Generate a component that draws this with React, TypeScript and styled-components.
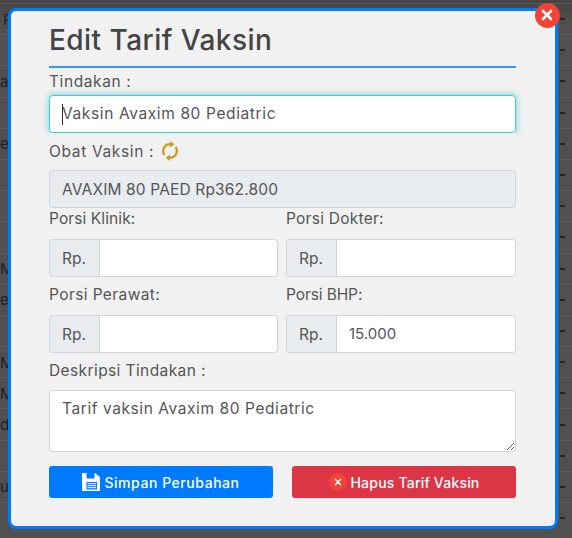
import styled, { createGlobalStyle } from "styled-components";

const GlobalStyle = createGlobalStyle`
  html, body {
    margin: 0;
    height: 100%;
    overflow: hidden;
    background-color: #505050;
  }
  * {
    box-sizing: border-box;
  }
`;

const Page = styled.div`
  position: relative;
  width: 572px;
  height: 538px;
  overflow: hidden;
  background-color: #505050;
  font-family: Inter, "Liberation Sans", sans-serif;
`;

const BackgroundTable = styled.div`
  display: flex;
  flex-direction: column;
  padding-top: 3px;
  background: linear-gradient(#444444, #505050 24px);
`;

const BackgroundRow = styled.div<{ $indent: number }>`
  display: flex;
  justify-content: space-between;
  align-items: center;
  height: 31.2px;
  padding-left: ${(p) => p.$indent}px;
  padding-right: 7px;
  border-top: 1px solid #5b5b5b;
  color: #202020;
  font-size: 15px;
`;

const RowDash = styled.span`
  width: 5px;
  height: 2px;
  background-color: #252525;
`;

const Modal = styled.div`
  position: absolute;
  top: 8px;
  left: 8px;
  width: 550px;
  height: 521px;
  padding: 0 39px 0 38px;
  background-color: #f1f1f1;
  border: 3px solid #007bff;
  border-radius: 8px;
`;

const CloseButton = styled.button`
  position: absolute;
  top: -8.5px;
  right: -4.5px;
  width: 25px;
  height: 25px;
  padding: 0;
  display: flex;
  align-items: center;
  justify-content: center;
  border: none;
  border-radius: 50%;
  background-color: #f44336;
`;

const Title = styled.h2`
  margin: 0;
  height: 55px;
  padding-top: 9px;
  color: #444444;
  font-size: 28px;
  font-weight: 500;
  line-height: 40px;
  letter-spacing: 0.45px;
`;

const Divider = styled.div`
  height: 1.5px;
  background-color: #3097ff;
`;

const Label = styled.label<{ $top?: number; $bottom?: number; $spacing?: number }>`
  position: relative;
  display: flex;
  align-items: center;
  height: 22px;
  margin-top: ${(p) => p.$top ?? 0}px;
  margin-bottom: ${(p) => p.$bottom ?? 0}px;
  color: #555555;
  font-size: 15.5px;
  line-height: 22px;
  letter-spacing: ${(p) => p.$spacing ?? 0.4}px;
`;

const FocusField = styled.div`
  position: relative;
  height: 38px;
`;

const Caret = styled.span`
  position: absolute;
  top: 9px;
  left: 13px;
  width: 1px;
  height: 21px;
  background-color: #333333;
`;

const TextInput = styled.input<{ $focused?: boolean }>`
  display: block;
  width: 100%;
  height: 38px;
  padding: 0 12px 2px;
  border: 1px solid ${(p) => (p.$focused ? "#47c9d8" : "#ced4da")};
  border-radius: 4px;
  background-color: #ffffff;
  color: #555555;
  font-family: inherit;
  font-size: 15.5px;
  letter-spacing: 0.62px;
  outline: none;
  box-shadow: ${(p) => (p.$focused ? "0 0 5px 2px rgba(71, 201, 216, 0.45)" : "none")};
`;

const ObatRow = styled.div`
  position: relative;
  display: flex;
  align-items: center;
  gap: 7px;
  height: 37px;
  padding: 7px 0 8px;
  background-color: #f1f1f1;
  color: #555555;
  font-size: 15.5px;
  letter-spacing: 0.65px;
`;

const DisabledInput = styled(TextInput)`
  padding-bottom: 0;
  background-color: #e9ecef;
  letter-spacing: 0.15px;
`;

const Columns = styled.div`
  display: grid;
  grid-template-columns: 229px 230px;
  column-gap: 8px;
`;

const InputGroup = styled.div`
  display: flex;
  height: 38px;
`;

const Addon = styled.span`
  display: flex;
  align-items: center;
  width: 50px;
  padding-left: 12px;
  border: 1px solid #ced4da;
  border-right: none;
  border-radius: 4px 0 0 4px;
  background-color: #e9ecef;
  color: #555555;
  font-size: 15.5px;
`;

const GroupInput = styled(TextInput)`
  flex: 1;
  min-width: 0;
  border-radius: 0 4px 4px 0;
  font-size: 15px;
  letter-spacing: 0;
`;

const TextArea = styled.textarea`
  display: block;
  width: 100%;
  height: 62px;
  padding: 6px 12px;
  border: 1px solid #ced4da;
  border-radius: 4px;
  background-color: #ffffff;
  color: #555555;
  font-family: inherit;
  font-size: 15.5px;
  line-height: 24px;
  letter-spacing: 0.58px;
  outline: none;
`;

const Actions = styled.div`
  display: grid;
  grid-template-columns: 224px 224px;
  column-gap: 19px;
  margin-top: 14px;
`;

const ActionButton = styled.button<{ $color: string; $spacing: number }>`
  display: flex;
  align-items: center;
  justify-content: center;
  gap: 4px;
  height: 32px;
  padding: 0;
  border: none;
  border-radius: 3px;
  background-color: ${(p) => p.$color};
  color: #ffffff;
  font-family: inherit;
  font-size: 14px;
  font-weight: 500;
  letter-spacing: ${(p) => p.$spacing}px;
`;

const XBadge = styled.span`
  display: flex;
  align-items: center;
  justify-content: center;
  width: 18px;
  height: 18px;
  border-radius: 50%;
  background-color: #f44336;
`;

const rows = [
  { indent: 3, text: "R" },
  { indent: 100, text: "" },
  { indent: -2, text: "a" },
  { indent: 100, text: "" },
  { indent: -1, text: "e" },
  { indent: 100, text: "" },
  { indent: 100, text: "" },
  { indent: 100, text: "" },
  { indent: -4, text: "M" },
  { indent: -1, text: "e" },
  { indent: 100, text: "" },
  { indent: -4, text: "M" },
  { indent: 0, text: "M" },
  { indent: -3, text: "d" },
  { indent: 100, text: "" },
  { indent: -1, text: "ur" },
  { indent: 100, text: "" },
];

function CrossIcon({ size, weight }: { size: number; weight: number }) {
  return (
    <svg width={size} height={size} viewBox="0 0 12 12">
      <path d="M2 2 L10 10 M10 2 L2 10" stroke="#ffffff" strokeWidth={weight} strokeLinecap="round" />
    </svg>
  );
}

function SaveIcon() {
  return (
    <svg width="18" height="18" viewBox="0 0 18 18">
      <path
        fill="#ffffff"
        fillRule="evenodd"
        d="M1 0 H13 L18 4 V17 Q18 18 17 18 H1 Q0 18 0 17 V1 Q0 0 1 0 Z M4.5 0 V5.5 H12.5 V0 Z M4.5 9 V16.5 H15 V9 Z"
      />
      <path d="M5.5 10.7 H14 M5.5 12.7 H14 M5.5 14.7 H14" stroke="#ffffff" strokeWidth="1" />
    </svg>
  );
}

function SyncIcon() {
  return (
    <svg width="18" height="20" viewBox="0 0 18 20">
      <g fill="none" stroke="#c8a02c" strokeWidth="2.4">
        <path d="M3.5 14 A6.7 6.7 0 0 1 9 3.3" />
        <path d="M14.5 6 A6.7 6.7 0 0 1 9 16.7" />
      </g>
      <path d="M9 0 L13.5 3.3 L9 6.6 Z M9 13.4 L4.5 16.7 L9 20 Z" fill="#c8a02c" />
    </svg>
  );
}

export default function App() {
  return (
    <Page>
      <GlobalStyle />
      <BackgroundTable>
        {rows.map((row, i) => (
          <BackgroundRow key={i} $indent={row.indent}>
            <span>{row.text}</span>
            <RowDash />
          </BackgroundRow>
        ))}
      </BackgroundTable>
      <Modal>
        <CloseButton aria-label="Tutup">
          <CrossIcon size={12} weight={2.6} />
        </CloseButton>
        <Title>Edit Tarif Vaksin</Title>
        <Divider />
        <Label $top={3.5} $bottom={2} $spacing={0.6}>Tindakan :</Label>
        <FocusField>
          <TextInput $focused defaultValue="Vaksin Avaxim 80 Pediatric" />
          <Caret />
        </FocusField>
        <ObatRow>
          <span>Obat Vaksin :</span>
          <SyncIcon />
        </ObatRow>
        <DisabledInput disabled defaultValue="AVAXIM 80 PAED Rp362.800" />
        <Columns>
          <div>
            <Label $bottom={9} $spacing={0.1}>Porsi Klinik:</Label>
            <InputGroup>
              <Addon>Rp.</Addon>
              <GroupInput />
            </InputGroup>
            <Label $top={7} $bottom={9}>Porsi Perawat:</Label>
            <InputGroup>
              <Addon>Rp.</Addon>
              <GroupInput />
            </InputGroup>
          </div>
          <div>
            <Label $bottom={9} $spacing={0.25}>Porsi Dokter:</Label>
            <InputGroup>
              <Addon>Rp.</Addon>
              <GroupInput />
            </InputGroup>
            <Label $top={7} $bottom={9} $spacing={-0.1}>Porsi BHP:</Label>
            <InputGroup>
              <Addon>Rp.</Addon>
              <GroupInput defaultValue="15.000" />
            </InputGroup>
          </div>
        </Columns>
        <Label $top={7} $bottom={8}>Deskripsi Tindakan :</Label>
        <TextArea defaultValue="Tarif vaksin Avaxim 80 Pediatric" />
        <Actions>
          <ActionButton $color="#007bff" $spacing={0.55}>
            <SaveIcon />
            Simpan Perubahan
          </ActionButton>
          <ActionButton $color="#dc3545" $spacing={0.2}>
            <XBadge>
              <CrossIcon size={8} weight={2.2} />
            </XBadge>
            Hapus Tarif Vaksin
          </ActionButton>
        </Actions>
      </Modal>
    </Page>
  );
}
